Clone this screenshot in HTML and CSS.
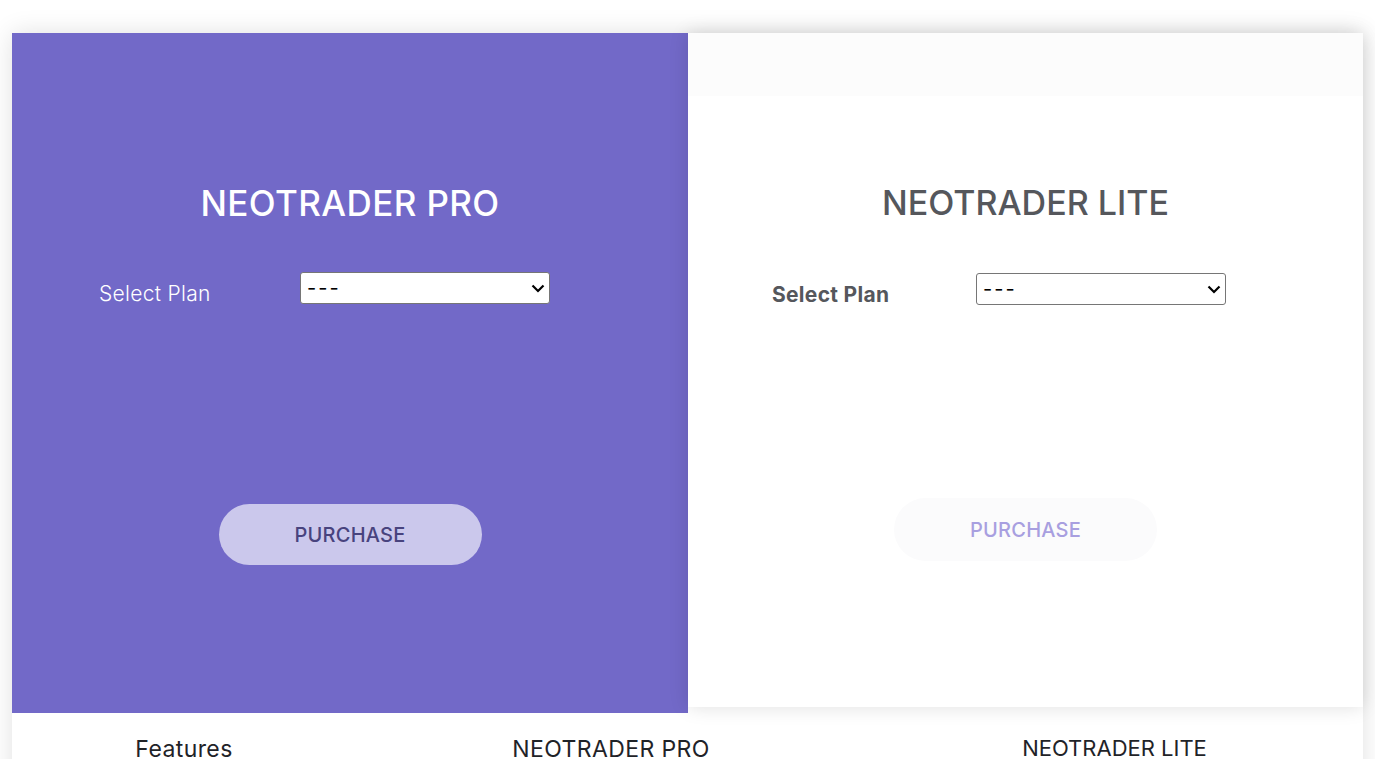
FILE: index.html
```html
<!DOCTYPE html>
<html lang="en">
<head>
  <meta charset="UTF-8" />
  <meta name="viewport" content="width=device-width, initial-scale=1.0"/>
  <title>Neotrader Plans</title>
  <link rel="stylesheet" href="styles.css">
</head>
<body>

  <div class="pricing">
    <div class="plans">
      <div class="plan plan-pro">
        <h2 class="plan-title">NEOTRADER PRO</h2>
        <div class="plan-row">
          <label for="planPro">Select Plan</label>
          <div class="select-wrap">
            <select id="planPro">
              <option value="">---</option>
              <option value="1">1 Month</option>
              <option value="3">3 Months</option>
              <option value="12">12 Months</option>
            </select>
            <svg class="chevron" width="14" height="9" viewBox="0 0 14 9"><path d="M1.5 1.5 L7 7 L12.5 1.5" fill="none" stroke="#000" stroke-width="2.2"/></svg>
          </div>
        </div>
        <button class="btn-purchase">PURCHASE</button>
      </div>

      <div class="plan plan-lite">
        <div class="plan-top"></div>
        <h2 class="plan-title">NEOTRADER LITE</h2>
        <div class="plan-row">
          <label for="planLite">Select Plan</label>
          <div class="select-wrap">
            <select id="planLite">
              <option value="">---</option>
              <option value="1">1 Month</option>
              <option value="3">3 Months</option>
              <option value="12">12 Months</option>
            </select>
            <svg class="chevron" width="14" height="9" viewBox="0 0 14 9"><path d="M1.5 1.5 L7 7 L12.5 1.5" fill="none" stroke="#000" stroke-width="2.2"/></svg>
          </div>
        </div>
        <button class="btn-purchase">PURCHASE</button>
      </div>
    </div>

    <div class="compare-head">
      <div>Features</div>
      <div>NEOTRADER PRO</div>
      <div class="col-lite">NEOTRADER LITE</div>
    </div>
  </div>

</body>
</html>
```

FILE: styles.css
```css
body {
  margin: 0;
  padding: 33px 12px 0;
  font-family: Inter, "Open Sans", sans-serif;
  background: #fff;
  overflow: hidden;
}
.pricing {
  background: #fff;
  box-shadow: 0 0 24px rgba(0, 0, 0, 0.12);
}
.plans {
  display: grid;
  grid-template-columns: 676px 1fr;
  align-items: start;
}
.plan {
  display: flex;
  flex-direction: column;
  align-items: center;
}
.plan-title {
  margin: 0;
  font-size: 35px;
  line-height: 40px;
  font-weight: 500;
  letter-spacing: 0.4px;
}
.plan-row {
  display: flex;
  align-items: center;
  align-self: stretch;
  height: 32px;
}
.plan-row label {
  font-size: 21px;
  letter-spacing: 0.3px;
  padding-top: 10px;
}
.select-wrap {
  position: relative;
  width: 250px;
  height: 32px;
}
.select-wrap select {
  appearance: none;
  width: 100%;
  height: 100%;
  padding: 0 30px 0 6px;
  font-size: 20px;
  letter-spacing: 2px;
  font-family: Inter, sans-serif;
  border: 1px solid #767676;
  border-radius: 3px;
  background: #fff;
  color: #000;
}
.chevron {
  position: absolute;
  right: 5px;
  top: 12px;
  pointer-events: none;
}
.btn-purchase {
  width: 263px;
  border: none;
  border-radius: 32px;
  font-family: inherit;
  font-size: 20px;
  font-weight: 500;
  letter-spacing: 0.2px;
  cursor: pointer;
}

/* pro */
.plan-pro {
  background: #7269c8;
  height: 680px;
  padding-top: 150px;
  box-sizing: border-box;
  color: #fff;
}
.plan-pro .plan-row {
  margin-top: 49px;
  padding-left: 87px;
}
.plan-pro .plan-row label {
  width: 201px;
  font-weight: 300;
}
.plan-pro .btn-purchase {
  margin-top: 200px;
  height: 61px;
  background: #cbc8ec;
  color: #48437e;
}

/* lite */
.plan-lite {
  position: relative;
  z-index: 1;
  height: 674px;
  background: #fff;
  color: #55575c;
  box-shadow: 0 0 18px rgba(0, 0, 0, 0.13);
}
.plan-lite .plan-title {
  font-size: 34px;
  letter-spacing: 0;
}
.plan-top {
  align-self: stretch;
  height: 63px;
  background: #fcfcfc;
  margin-bottom: 87px;
}
.plan-lite .plan-row {
  margin-top: 50px;
  padding-left: 84px;
}
.plan-lite .plan-row label {
  width: 204px;
  font-weight: 700;
}
.plan-lite .btn-purchase {
  margin-top: 193px;
  height: 63px;
  background: #fbfbfc;
  color: #a89fe0;
}

/* comparison table head */
.compare-head {
  display: grid;
  grid-template-columns: 344px 510px 1fr;
  padding-top: 22px;
  height: 60px;
  font-size: 23px;
  letter-spacing: 0.4px;
  color: #1f2328;
  text-align: center;
}
.compare-head .col-lite {
  font-size: 22px;
  letter-spacing: 0;
}
```
